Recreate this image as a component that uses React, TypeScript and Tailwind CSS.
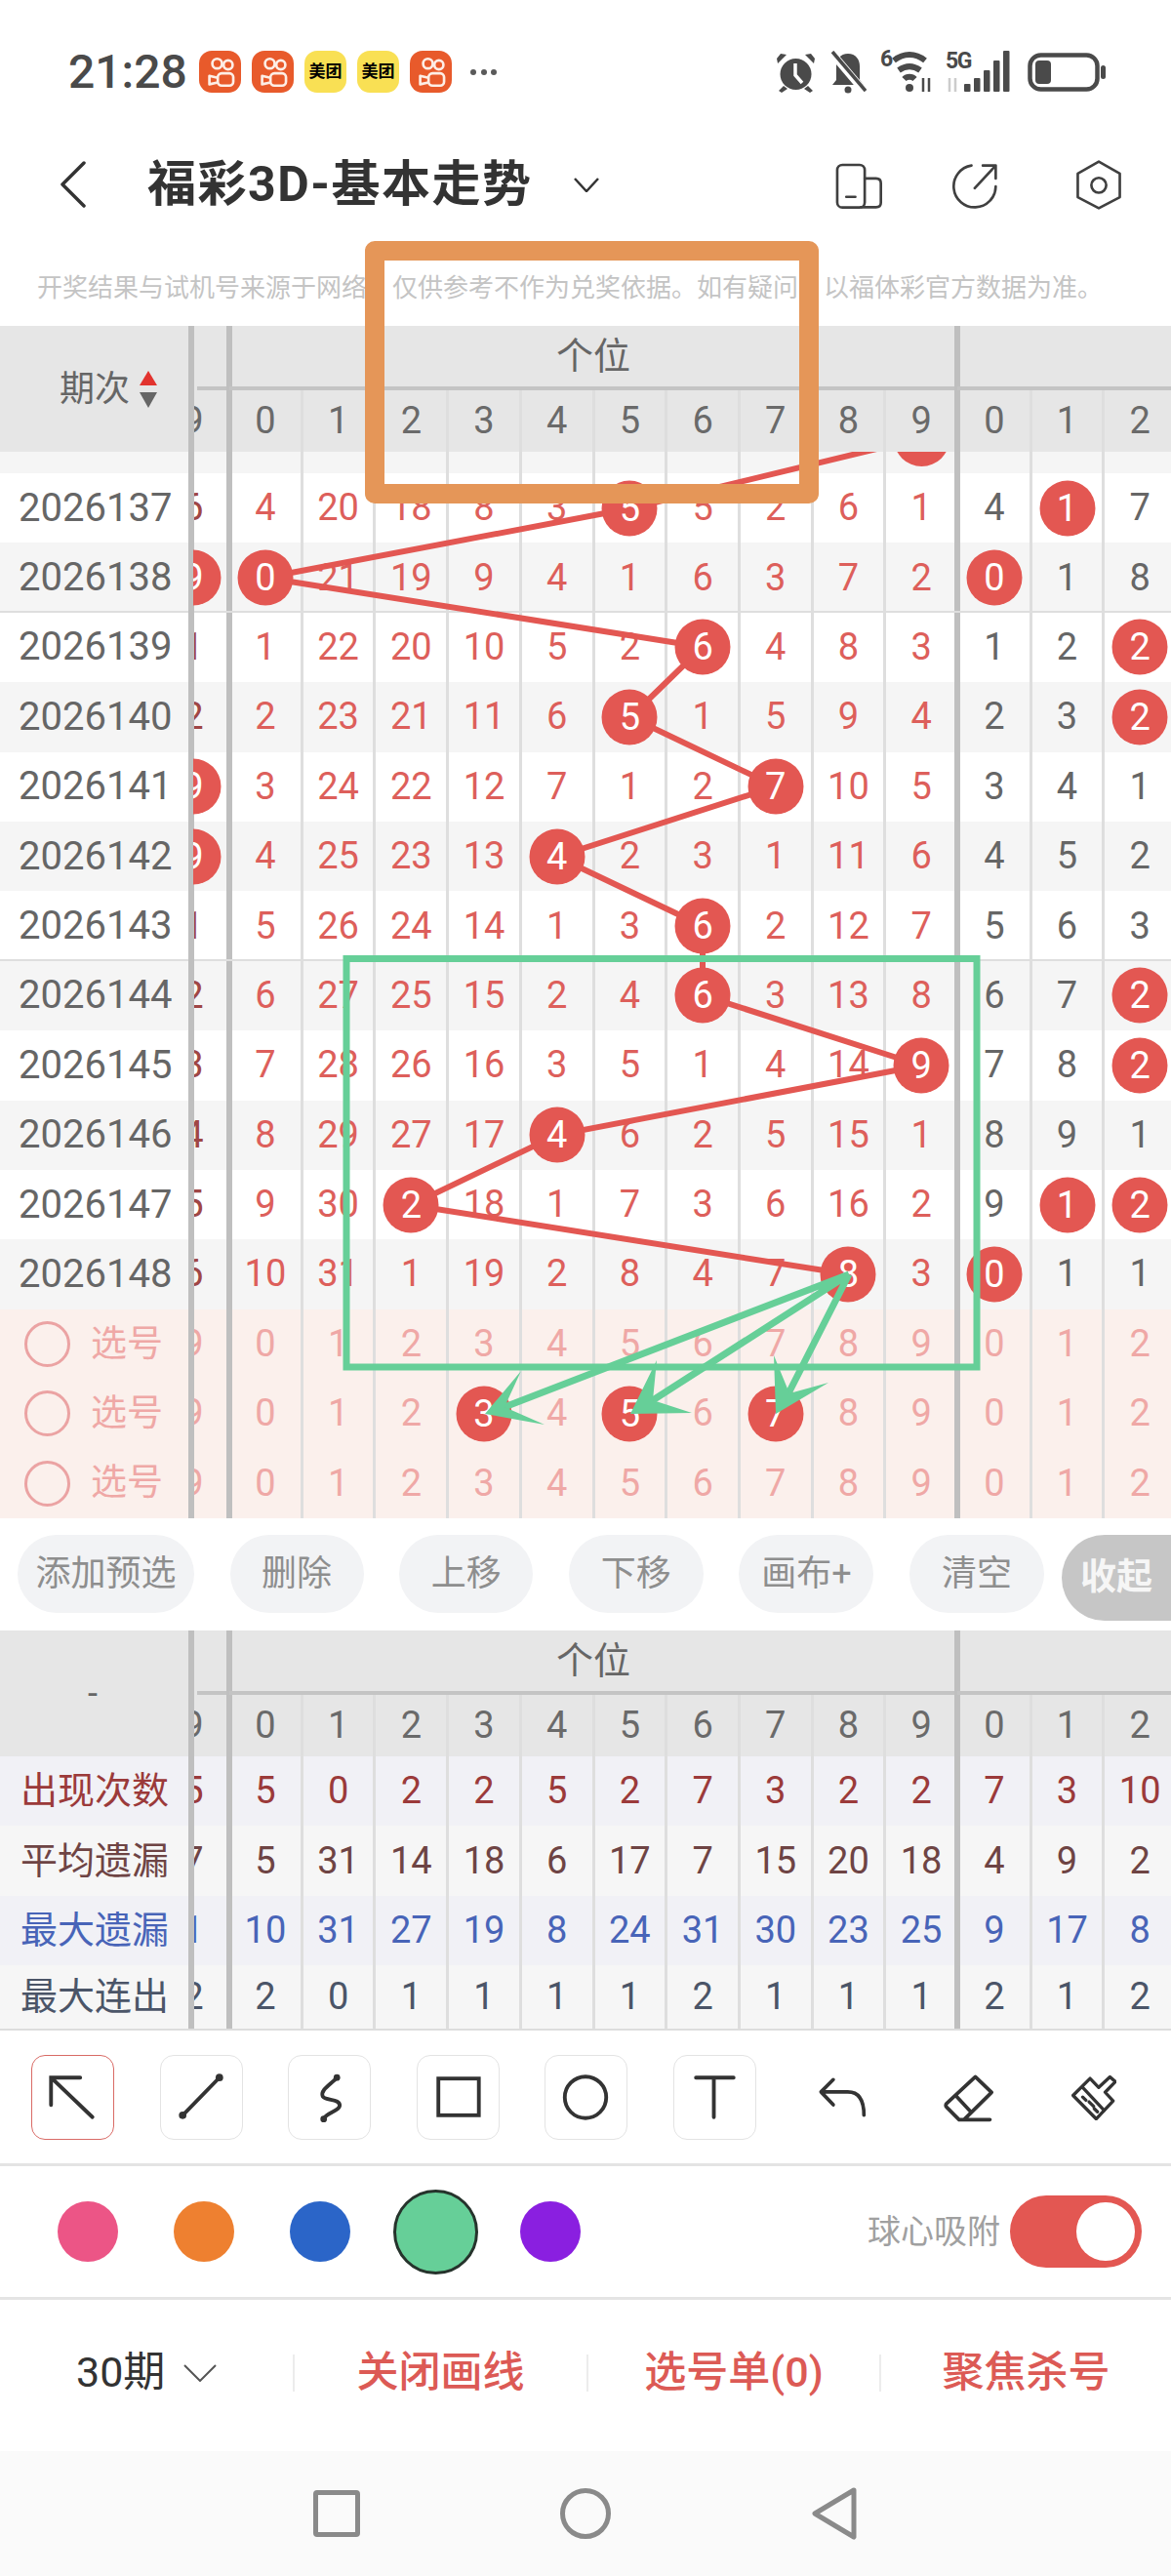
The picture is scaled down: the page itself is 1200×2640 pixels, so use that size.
import type { ReactNode } from 'react'

const COLS = 'grid grid-cols-[192px_42.6px_repeat(13,74.7px)]'

const TONES = {
  red: 'text-[#dd5f5b]',
  gray: 'text-[#666666]',
  clip: 'text-[#a04644]',
  pink: 'text-[#efa8a6]',
  head: 'text-[#6a6a6a]',
  s1: 'text-[#9b3a3a]',
  s2: 'text-[#6e4444]',
  s3: 'text-[#4864b8]',
  s4: 'text-[#4b5568]',
}
type Tone = keyof typeof TONES

const ROWS = [
  { id: '2026137', clip: '6', cells: [4, 20, 18, 8, 3, 5, 5, 2, 6, 1, 4, 1, 7], balls: [5, 11] },
  { id: '2026138', clip: '9', clipBall: true, cells: [0, 21, 19, 9, 4, 1, 6, 3, 7, 2, 0, 1, 8], balls: [0, 10], rule: true },
  { id: '2026139', clip: '1', cells: [1, 22, 20, 10, 5, 2, 6, 4, 8, 3, 1, 2, 2], balls: [6, 12] },
  { id: '2026140', clip: '2', cells: [2, 23, 21, 11, 6, 5, 1, 5, 9, 4, 2, 3, 2], balls: [5, 12] },
  { id: '2026141', clip: '9', clipBall: true, cells: [3, 24, 22, 12, 7, 1, 2, 7, 10, 5, 3, 4, 1], balls: [7] },
  { id: '2026142', clip: '9', clipBall: true, cells: [4, 25, 23, 13, 4, 2, 3, 1, 11, 6, 4, 5, 2], balls: [4] },
  { id: '2026143', clip: '1', cells: [5, 26, 24, 14, 1, 3, 6, 2, 12, 7, 5, 6, 3], balls: [6], rule: true },
  { id: '2026144', clip: '2', cells: [6, 27, 25, 15, 2, 4, 6, 3, 13, 8, 6, 7, 2], balls: [6, 12] },
  { id: '2026145', clip: '3', cells: [7, 28, 26, 16, 3, 5, 1, 4, 14, 9, 7, 8, 2], balls: [9, 12] },
  { id: '2026146', clip: '4', cells: [8, 29, 27, 17, 4, 6, 2, 5, 15, 1, 8, 9, 1], balls: [4] },
  { id: '2026147', clip: '5', cells: [9, 30, 2, 18, 1, 7, 3, 6, 16, 2, 9, 1, 2], balls: [2, 11, 12] },
  { id: '2026148', clip: '6', cells: [10, 31, 1, 19, 2, 8, 4, 7, 8, 3, 0, 1, 1], balls: [8, 10] },
]

const DIGITS = [0, 1, 2, 3, 4, 5, 6, 7, 8, 9, 0, 1, 2]

const STATS: { label: string; clip: string; tone: Tone; bg: string; h: string; cells: number[] }[] = [
  { label: '出现次数', clip: '5', tone: 's1', bg: 'bg-[#f1f1f6]', h: 'h-[71.4px]', cells: [5, 0, 2, 2, 5, 2, 7, 3, 2, 2, 7, 3, 10] },
  { label: '平均遗漏', clip: '7', tone: 's2', bg: 'bg-[#f6f6f6]', h: 'h-[71.4px]', cells: [5, 31, 14, 18, 6, 17, 7, 15, 20, 18, 4, 9, 2] },
  { label: '最大遗漏', clip: '1', tone: 's3', bg: 'bg-[#f1f1f6]', h: 'h-[71.4px]', cells: [10, 31, 27, 19, 8, 24, 31, 30, 23, 25, 9, 17, 8] },
  { label: '最大连出', clip: '2', tone: 's4', bg: 'bg-[#f6f6f6]', h: 'h-[65px]', cells: [2, 0, 1, 1, 1, 1, 2, 1, 1, 1, 2, 1, 2] },
]

// trend line, page coordinates
const TREND = '944,449 646,521 272,592 720,663 646,735 795,806 571,878 720,949 720,1020 944,1092 571,1163 421,1235 870,1306'

function Ball({ value }: { value: ReactNode }) {
  return (
    <span className="absolute left-1/2 top-1/2 z-10 flex h-[57px] w-[57px] -translate-x-1/2 -translate-y-1/2 items-center justify-center rounded-full bg-[#e35752] text-white">
      {value}
    </span>
  )
}

function Cell({ col, value, tone, ball }: { col: number; value?: ReactNode; tone: Tone; ball?: boolean }) {
  const thick = col === 0 || col === 10
  return (
    <div className={`relative flex items-center justify-center text-[38px] ${TONES[tone]}`}>
      {thick ? (
        <i className="absolute -left-[3px] inset-y-0 w-[6px] bg-[#bfbfbf]" />
      ) : (
        <i className="absolute -left-[1.5px] inset-y-0 w-[3px] bg-[#dedede]" />
      )}
      {ball ? <Ball value={value} /> : <span>{value}</span>}
    </div>
  )
}

// the half-scrolled column sitting under the frozen first column
function ClipCell({ value, tone, ball }: { value?: ReactNode; tone: Tone; ball?: boolean }) {
  return (
    <div className="relative">
      <i className="absolute left-[0.5px] inset-y-0 z-[1] w-[6px] bg-[#bfbfbf]" />
      <div className="absolute left-[6px] inset-y-0 right-0 overflow-hidden">
        <div className={`absolute -left-[37.4px] inset-y-0 flex w-[74.7px] items-center justify-center text-[38px] ${TONES[tone]}`}>
          {ball ? <Ball value={value} /> : <span>{value}</span>}
        </div>
      </div>
    </div>
  )
}

function TableHead({ left }: { left: ReactNode }) {
  return (
    <div className={`${COLS} h-[129px] grid-rows-[66px_63px] bg-[#e6e6e6]`}>
      <div className="row-span-2 flex items-center">{left}</div>
      <div className="relative">
        <i className="absolute left-[0.5px] inset-y-0 w-[6px] bg-[#bfbfbf]" />
        <i className="absolute bottom-0 left-[10px] right-0 h-[4px] bg-[#c4c4c4]" />
      </div>
      <div className="relative col-span-10 flex items-center justify-center pb-[4px] text-[38px] text-[#666666]">
        <i className="absolute -left-[3px] inset-y-0 w-[6px] bg-[#bfbfbf]" />
        <i className="absolute bottom-0 inset-x-0 h-[4px] bg-[#c4c4c4]" />
        个位
      </div>
      <div className="relative col-span-3">
        <i className="absolute -left-[3px] inset-y-0 w-[6px] bg-[#bfbfbf]" />
        <i className="absolute bottom-0 inset-x-0 h-[4px] bg-[#c4c4c4]" />
      </div>
      <ClipCell value="9" tone="head" />
      {DIGITS.map((d, i) => (
        <Cell key={i} col={i} value={d} tone="head" />
      ))}
    </div>
  )
}

function DrawRow({ id, clip, clipBall, cells, balls, rule, striped }: (typeof ROWS)[number] & { clipBall?: boolean; rule?: boolean; striped: boolean }) {
  return (
    <div className={`${COLS} relative h-[71.4px] ${striped ? 'bg-[#f5f5f5]' : 'bg-white'}`}>
      <div className="flex items-center pl-[19px] text-[40px] text-[#666666]">{id}</div>
      <ClipCell value={clip} tone="clip" ball={clipBall} />
      {cells.map((c, i) => (
        <Cell key={i} col={i} value={c} tone={i < 10 ? 'red' : 'gray'} ball={balls.includes(i)} />
      ))}
      {rule && <i className="absolute bottom-[-1.5px] inset-x-0 h-[3px] bg-[#dedede]" />}
    </div>
  )
}

function PickRow({ balls }: { balls: number[] }) {
  return (
    <div className={`${COLS} h-[71.4px] bg-[#fbf0ec]`}>
      <div className="flex items-center gap-[21px] pl-[25px] text-[37px] text-[#efa8a6]">
        <span className="h-[47px] w-[47px] rounded-full border-[3px] border-[#eba3a3]" />
        选号
      </div>
      <ClipCell value="9" tone="pink" />
      {DIGITS.map((d, i) => (
        <Cell key={i} col={i} value={d} tone="pink" ball={balls.includes(i)} />
      ))}
    </div>
  )
}

function Kuaishou() {
  return (
    <span className="flex h-[43px] w-[43px] items-center justify-center rounded-[13px] bg-[#e85a2b]">
      <svg viewBox="12 22 130 130" className="h-[43px] w-[43px]" fill="none" stroke="#fdeee6" strokeWidth="8" strokeLinejoin="round">
        <circle cx="68" cy="62" r="15" />
        <circle cx="102" cy="66" r="14" />
        <rect x="70" y="92" width="48" height="38" rx="12" />
        <path d="M70 106 44 100v26l26-6" />
      </svg>
    </span>
  )
}

function Meituan() {
  return (
    <span className="flex h-[43px] w-[43px] items-center justify-center rounded-[13px] bg-[#f9e054] text-[17px] font-bold leading-none text-black">
      美团
    </span>
  )
}

function StatusBar() {
  return (
    <div className="mt-[52px] flex h-[43px] items-center pl-[70px] pr-[67px]">
      <span className="w-[134px] text-[48px] font-medium leading-none text-[#4a4a4a]">21:28</span>
      <div className="flex gap-[11px]">
        <Kuaishou />
        <Kuaishou />
        <Meituan />
        <Meituan />
        <Kuaishou />
      </div>
      <div className="ml-[19px] flex gap-[4.5px]">
        <span className="h-[6px] w-[6px] rounded-full bg-[#5a5a5a]" />
        <span className="h-[6px] w-[6px] rounded-full bg-[#5a5a5a]" />
        <span className="h-[6px] w-[6px] rounded-full bg-[#5a5a5a]" />
      </div>
      <div className="ml-auto flex items-center text-[#4a4a4a]">
        <svg viewBox="0 0 39 42" className="h-[42px] w-[39px]" fill="#4a4a4a">
          <circle cx="19.5" cy="23" r="16" />
          <path d="M1 12 10 3 4 2 0 7ZM38 12 29 3l6-1 4 5ZM7 35l-5 5 3 2 6-4ZM32 35l5 5-3 2-6-4Z" />
          <path d="M19 12v12l7 8" fill="none" stroke="#fff" strokeWidth="3.5" />
        </svg>
        <svg viewBox="0 0 38 44" className="ml-[15px] h-[44px] w-[38px]">
          <path d="M19 3c-8 0-12 6-12 13v14l-4 5h32l-4-5V16c0-7-4-13-12-13Z" fill="#4a4a4a" />
          <circle cx="19" cy="40" r="3.5" fill="#4a4a4a" />
          <path d="M2 2 36 42" stroke="#fff" strokeWidth="8" />
          <path d="M3 1 37 41" stroke="#4a4a4a" strokeWidth="3.5" />
        </svg>
        <div className="relative ml-[14px] h-[44px] w-[55px]">
          <span className="absolute left-0 top-[-3px] text-[23px] font-bold leading-none">6</span>
          <svg viewBox="0 0 55 44" className="h-[44px] w-[55px]" fill="none" stroke="#4a4a4a" strokeWidth="6">
            <path d="M14 10c10-8 22-8 32 0M19 20c7-5 15-5 22 0M24.500 29c3-3 8-3 11 0" />
            <circle cx="30" cy="38" r="4" fill="#4a4a4a" stroke="none" />
            <path d="M44 28v14M50 28v14" strokeWidth="2.5" />
          </svg>
        </div>
        <div className="relative ml-[12px] h-[44px] w-[66px]">
          <span className="absolute left-0 top-[-1px] text-[23px] font-bold leading-none tracking-[-1.500px]">5G</span>
          <svg viewBox="0 0 66 44" className="h-[44px] w-[66px]" fill="#4a4a4a">
            <path d="M4 28v14M10 28v14" stroke="#cccccc" strokeWidth="2.5" />
            <rect x="19" y="34" width="6.5" height="8" rx="1" />
            <rect x="29" y="28" width="6.5" height="14" rx="1" />
            <rect x="39" y="20" width="6.5" height="22" rx="1" />
            <rect x="49" y="10" width="6.5" height="32" rx="1" />
            <rect x="59" y="0" width="6.5" height="42" rx="1" />
          </svg>
        </div>
        <svg viewBox="0 0 80 40" className="ml-[18px] h-[40px] w-[80px]" fill="none" stroke="#4a4a4a" strokeWidth="4.5">
          <rect x="2.5" y="2.5" width="69" height="35" rx="11" />
          <rect x="8" y="8" width="16" height="24" rx="4" fill="#4a4a4a" stroke="none" />
          <rect x="75" y="13" width="5" height="14" rx="2.5" fill="#4a4a4a" stroke="none" />
        </svg>
      </div>
    </div>
  )
}

function TitleBar() {
  return (
    <div className="relative mt-[70px] flex h-[48px] items-center pl-[61px]">
      <svg viewBox="0 0 27 48" className="h-[48px] w-[27px]" fill="none" stroke="#333333" strokeWidth="3.5" strokeLinecap="round" strokeLinejoin="round">
        <path d="M25 2 3 24l22 22" />
      </svg>
      <span className="ml-[63px] text-[50px] font-bold leading-none tracking-[1.5px] text-[#333333]">福彩3D-基本走势</span>
      <svg viewBox="0 0 26 15" className="ml-[43px] h-[15px] w-[26px]" fill="none" stroke="#333333" strokeWidth="2.5">
        <path d="M1 1 13 14 25 1" />
      </svg>
      <div className="ml-auto flex items-center pr-[49px]">
        <svg viewBox="40 40 160 160" className="h-[53px] w-[53px]" fill="none" stroke="#404040" strokeWidth="8" strokeLinecap="round">
          <rect x="52" y="58" width="85" height="132" rx="16" />
          <path d="M137 100h35q15 0 15 15v60q0 14-15 14h-47M80 157h28" />
        </svg>
        <svg viewBox="400 40 160 160" className="ml-[67px] h-[53px] w-[53px]" fill="none" stroke="#404040" strokeWidth="8" strokeLinecap="round" strokeLinejoin="round">
          <path d="M465 60A65 65 0 1 0 540 125M475 130 540 60M500 60h40v40" />
        </svg>
        <svg viewBox="780 40 150 160" className="ml-[74px] h-[53px] w-[50px]" fill="none" stroke="#404040" strokeWidth="8" strokeLinejoin="round">
          <path d="M855 48 920 85v73l-65 34-65-34V85Z" />
          <circle cx="855" cy="121" r="23" />
        </svg>
      </div>
    </div>
  )
}

function TrendBody() {
  return (
    <div className="relative h-[1094px] overflow-hidden">
      {/* row 2026136, scrolled nearly out under the header */}
      <div className={`${COLS} relative h-[22px] bg-[#f5f5f5]`}>
        <div />
        <ClipCell tone="clip" />
        {DIGITS.map((_, i) => (
          <Cell key={i} col={i} tone="red" />
        ))}
        <span className="absolute left-[916px] top-[-42.5px] z-10 h-[57px] w-[57px] rounded-full bg-[#e35752]" />
      </div>
      {ROWS.map((r, i) => (
        <DrawRow key={r.id} {...r} striped={i % 2 === 1} />
      ))}
      <PickRow balls={[]} />
      <PickRow balls={[3, 5, 7]} />
      <PickRow balls={[]} />
      <svg viewBox="0 463 1200 1094" className="absolute left-0 top-0 z-[5] h-[1094px] w-[1200px]" fill="none">
        <polyline points={TREND} stroke="#e35752" strokeWidth="6" />
      </svg>
    </div>
  )
}

const ACTIONS = [
  { label: '添加预选', w: 'w-[181px]' },
  { label: '删除', w: 'w-[137px]' },
  { label: '上移', w: 'w-[137px]' },
  { label: '下移', w: 'w-[138px]' },
  { label: '画布+', w: 'w-[138px]' },
  { label: '清空', w: 'w-[138px]' },
]

function ActionRow() {
  return (
    <div className="flex h-[114px] items-start pl-[18px] pt-[16px]">
      <div className="flex gap-[36.6px]">
        {ACTIONS.map((a) => (
          <span key={a.label} className={`flex h-[80px] items-center justify-center rounded-full bg-[#f2f3f5] text-[36px] text-[#8e8e8e] ${a.w}`}>
            {a.label}
          </span>
        ))}
      </div>
      <span className="ml-[18px] flex h-[88px] flex-1 items-center rounded-l-full bg-[#c6c6c6] pl-[19px] text-[37px] font-semibold text-[#f6f6f6]">
        收起
      </span>
    </div>
  )
}

function StatsTable() {
  return (
    <div className="border-b-[2px] border-[#dddddd]">
      <TableHead left={<span className="w-full pr-[2px] text-center text-[36px] leading-none text-[#666666]">-</span>} />
      {STATS.map((s) => (
        <div key={s.label} className={`${COLS} ${s.bg} ${s.h}`}>
          <div className={`flex items-center pl-[21px] text-[38px] ${TONES[s.tone]}`}>{s.label}</div>
          <ClipCell value={s.clip} tone={s.tone} />
          {s.cells.map((c, i) => (
            <Cell key={i} col={i} value={c} tone={s.tone} />
          ))}
        </div>
      ))}
    </div>
  )
}

const TOOLS: ReactNode[] = [
  <path key="a" d="M64 65 20 23M51 23H20v29" />,
  <g key="l">
    <path d="M23 63 62 23" />
    <circle cx="23" cy="63" r="4" fill="#333333" stroke="none" />
    <circle cx="62" cy="23" r="4" fill="#333333" stroke="none" />
  </g>,
  <g key="s">
    <path d="M51 23C45 30 33 36 36 43c3 5 19 2 18 10-1 6-14 7-17 14" />
    <circle cx="51" cy="23" r="3.5" fill="#333333" stroke="none" />
    <circle cx="37" cy="67" r="3.5" fill="#333333" stroke="none" />
  </g>,
  <rect key="r" x="22" y="24" width="43" height="39" />,
  <circle key="c" cx="42.5" cy="44" r="22" />,
  <path key="t" d="M23 23h40M42 23v42" />,
]

function ToolRow() {
  return (
    <div className="flex h-[139px] items-start border-b-[3px] border-[#e4e4e4] pl-[32px] pt-[25px]">
      <div className="flex gap-[46.5px]">
        {TOOLS.map((icon, i) => (
          <span key={i} className={`h-[87px] w-[85px] rounded-[14px] border-[1.5px] ${i === 0 ? 'border-[#d96b66]' : 'border-[#e3e3e3]'}`}>
            <svg viewBox="0 0 85 87" className="h-[84px] w-[82px]" fill="none" stroke="#333333" strokeWidth="4" strokeLinecap="round">
              {icon}
            </svg>
          </span>
        ))}
      </div>
      <div className="ml-[62px] flex h-[87px] items-center">
        <svg viewBox="50 85 155 130" className="h-[43px] w-[52px]" fill="none" stroke="#333333" strokeWidth="11" strokeLinecap="round" strokeLinejoin="round">
          <path d="M100 95 62 133l38 40M62 133h83q50 0 50 72" />
        </svg>
        <svg viewBox="440 70 155 150" className="ml-[77px] h-[50px] w-[52px]" fill="none" stroke="#333333" strokeWidth="11" strokeLinecap="round" strokeLinejoin="round">
          <path d="M540 80 590 128 505 212H490L452 174q-6-6 0-12ZM480 138l48 52M490 212h95" />
        </svg>
        <svg viewBox="845 78 140 142" className="ml-[80px] h-[47px] w-[46px]" fill="none" stroke="#333333" strokeWidth="10" strokeLinecap="round" strokeLinejoin="round">
          <path d="M903 90 930 118 965 85 982 100 950 133 975 160 922 216 850 143ZM878 116 947 190M880 148l10 10M900 163l14 14M916 184l10 10" />
        </svg>
      </div>
    </div>
  )
}

function ColorRow() {
  return (
    <div className="flex h-[137px] items-center border-b-[3px] border-[#e4e4e4] pl-[59px] pr-[30px]">
      <span className="h-[62px] w-[62px] rounded-full bg-[#ec5586]" />
      <span className="ml-[57px] h-[62px] w-[62px] rounded-full bg-[#ee8030]" />
      <span className="ml-[57px] h-[62px] w-[62px] rounded-full bg-[#2b65c8]" />
      <span className="ml-[43.5px] h-[87px] w-[87px] rounded-full border-[3px] border-[#26332c] bg-[#66cf98]" />
      <span className="ml-[43.5px] h-[62px] w-[62px] rounded-full bg-[#8a1fe0]" />
      <span className="ml-auto text-[34px] text-[#a0a0a0]">球心吸附</span>
      <span className="ml-[10px] flex h-[74px] w-[135px] items-center justify-end rounded-full bg-[#e35752] pr-[7px]">
        <span className="h-[60px] w-[60px] rounded-full bg-white" />
      </span>
    </div>
  )
}

function BottomBar() {
  return (
    <div className="grid h-[155px] grid-cols-[300px_301px_300px_299px] items-center pb-[6px] text-[43px] font-medium text-[#dc5a55]">
      <div className="flex items-center pl-[78px] font-normal text-[#333333]">
        30期
        <svg viewBox="0 0 34 18" className="ml-[19px] h-[18px] w-[34px]" fill="none" stroke="#555555" strokeWidth="2">
          <path d="M1 1 17 17 33 1" />
        </svg>
      </div>
      <div className="flex h-[38px] items-center justify-center border-l-2 border-[#ececec]">关闭画线</div>
      <div className="flex h-[38px] items-center justify-center border-l-2 border-[#ececec]">选号单(0)</div>
      <div className="flex h-[38px] items-center justify-center border-l-2 border-[#ececec]">聚焦杀号</div>
    </div>
  )
}

function NavBar() {
  return (
    <div className="flex h-[128px] items-center justify-center gap-[205px] bg-[#fafafa]">
      <span className="h-[48px] w-[48px] rounded-[4px] border-[5px] border-[#8a8a8a]" />
      <span className="h-[52px] w-[52px] rounded-full border-[5px] border-[#8a8a8a]" />
      <svg viewBox="0 0 48 54" className="h-[54px] w-[48px]" fill="none" stroke="#8a8a8a" strokeWidth="5" strokeLinejoin="round">
        <path d="M44 3 4 27l40 24Z" />
      </svg>
    </div>
  )
}

function Annotations() {
  return (
    <svg viewBox="0 0 1200 2640" className="absolute left-0 top-0 z-20 h-[2640px] w-[1200px]" fill="none">
      <rect x="384" y="257" width="445" height="249" stroke="#e59658" strokeWidth="20" strokeLinejoin="round" />
      <rect x="355" y="982.5" width="646" height="418.5" stroke="#66cf98" strokeWidth="7" />
      <path d="M870 1306 517 1442M870 1306 669 1435M870 1306 808 1428" stroke="#66cf98" strokeWidth="7" />
      <path d="M497 1449 534 1405 517 1442 558 1460Z" fill="#66cf98" />
      <path d="M646 1449 673 1394 669 1435 709 1448Z" fill="#66cf98" />
      <path d="M795 1449 793 1389 809 1428 849 1417Z" fill="#66cf98" />
    </svg>
  )
}

export default function App() {
  return (
    <div className="relative h-[2640px] w-[1200px] overflow-hidden bg-white font-[family-name:Roboto,'Noto_Sans_CJK_SC',sans-serif]">
      <StatusBar />
      <TitleBar />
      <div className="mb-[22px] mt-[65px] flex h-[34px] items-center whitespace-nowrap pl-[38px] text-[26px] text-[#c4c4c4]">
        开奖结果与试机号来源于网络，仅供参考不作为兑奖依据。如有疑问，以福体彩官方数据为准。
      </div>
      <TableHead
        left={
          <div className="flex items-center pl-[61px] text-[36px] text-[#666666]">
            期次
            <svg viewBox="0 0 18 38" className="ml-[10px] h-[38px] w-[18px]">
              <path d="M9 0 18 15H0Z" fill="#e2332e" />
              <path d="M0 22H18L9 38Z" fill="#666666" />
            </svg>
          </div>
        }
      />
      <TrendBody />
      <ActionRow />
      <StatsTable />
      <ToolRow />
      <ColorRow />
      <BottomBar />
      <NavBar />
      <Annotations />
    </div>
  )
}
